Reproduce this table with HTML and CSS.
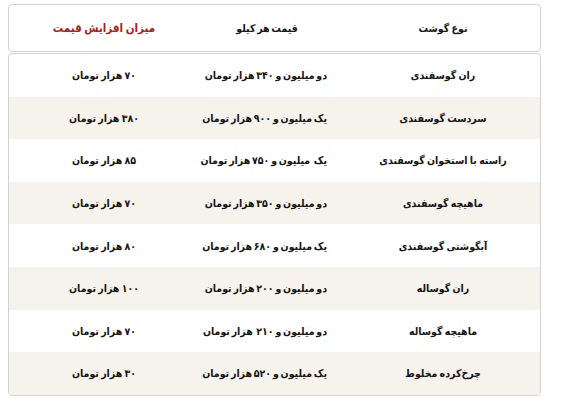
FILE: index.html
```html
<!DOCTYPE html>
<html lang="fa">
<head>
<meta charset="utf-8">
<link rel="stylesheet" href="styles.css">
</head>
<body>
<div class="wrap" dir="rtl">
  <div class="box head">
    <div class="cell c-type">نوع گوشت</div>
    <div class="cell c-price">قیمت هر کیلو</div>
    <div class="cell red">میزان افزایش قیمت</div>
  </div>
  <div class="box body">
    <div class="row"><div class="cell c-type">ران گوسفندی</div><div class="cell c-price">دو میلیون و ۳۴۰ هزار تومان</div><div class="cell">۷۰ هزار تومان</div></div>
    <div class="row alt"><div class="cell c-type">سردست گوسفندی</div><div class="cell c-price">یک میلیون و ۹۰۰ هزار تومان</div><div class="cell">۳۸۰ هزار تومان</div></div>
    <div class="row"><div class="cell c-type">راسته با استخوان گوسفندی</div><div class="cell c-price">یک&nbsp; میلیون و ۷۵۰ هزار تومان</div><div class="cell">۸۵ هزار تومان</div></div>
    <div class="row alt"><div class="cell c-type">ماهیچه گوسفندی</div><div class="cell c-price">دو میلیون و ۳۵۰ هزار تومان</div><div class="cell">۷۰ هزار تومان</div></div>
    <div class="row"><div class="cell c-type">آبگوشتی گوسفندی</div><div class="cell c-price">یک میلیون و ۶۸۰ هزار تومان</div><div class="cell">۸۰ هزار تومان</div></div>
    <div class="row alt"><div class="cell c-type">ران گوساله</div><div class="cell c-price">دو میلیون و ۲۰۰ هزار تومان</div><div class="cell">۱۰۰ هزار تومان</div></div>
    <div class="row"><div class="cell c-type">ماهیچه گوساله</div><div class="cell c-price">دو میلیون و ۲۱۰&nbsp; هزار تومان</div><div class="cell">۷۰ هزار تومان</div></div>
    <div class="row alt"><div class="cell c-type">چرخ‌کرده مخلوط</div><div class="cell c-price">یک میلیون و ۵۲۰ هزار تومان</div><div class="cell">۳۰ هزار تومان</div></div>
  </div>
</div>
</body>
</html>
```
FILE: styles.css
```css
html, body {
  margin: 0;
  padding: 0;
  background: #ffffff;
}
body {
  font-family: "DejaVu Sans Condensed", "DejaVu Sans", sans-serif;
  font-stretch: condensed;
  font-size: 10.5px;
  font-weight: bold;
  color: #151515;
}
.wrap {
  width: 533px;
  margin: 4px 0 0 8px;
  display: flex;
  flex-direction: column;
  gap: 1px;
}
.box {
  border: 1px solid #d2d2d2;
  border-radius: 4px;
  background: #ffffff;
  overflow: hidden;
}
.head {
  display: grid;
  grid-template-columns: 213px 128px 1fr;
  height: 46px;
  align-items: center;
}
.row {
  display: grid;
  grid-template-columns: 213px 128px 1fr;
  height: 42.6px;
  align-items: center;
}
.row.alt {
  background: #f5f3ec;
}
.cell {
  text-align: center;
  white-space: nowrap;
  word-spacing: -1px;
}
.c-type {
  padding-left: 19px;
}
.c-price {
  word-spacing: -1.5px;
  padding-left: 8px;
}
.red {
  color: #b51a1a;
  font-size: 11.5px;
}
```
